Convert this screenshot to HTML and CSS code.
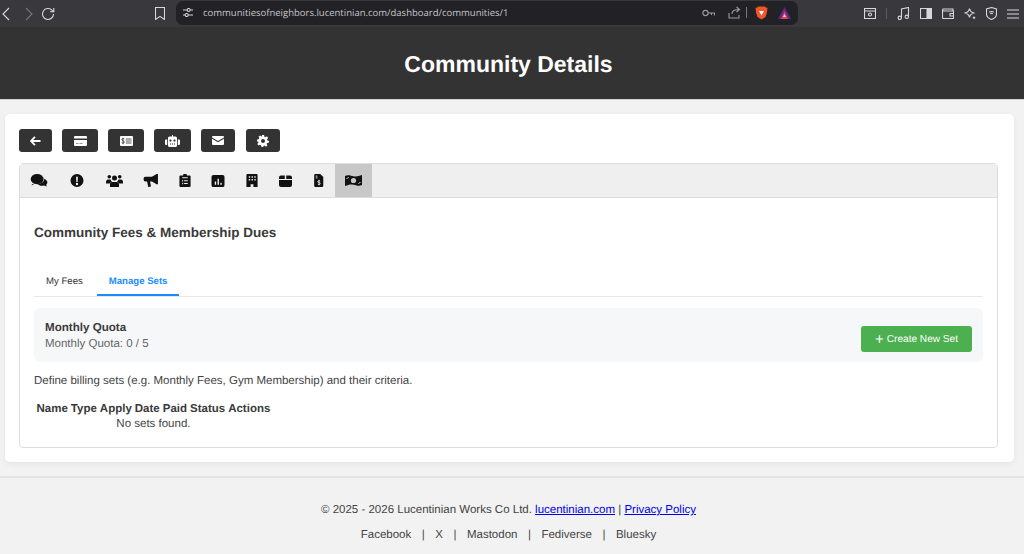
FILE: index.html
```html
<!DOCTYPE html>
<html lang="en">
<head>
  <meta charset="UTF-8" />
  <title>Community Details</title>
  <link rel="stylesheet" href="styles.css">
</head>
<body>

  <!-- BROWSER BAR -->
  <div class="browser-bar">
    <svg class="nav-icon nav-back" width="8" height="14" viewBox="0 0 8 14"><path d="M7 1 1 7l6 6"/></svg>
    <svg class="nav-icon nav-forward" width="8" height="14" viewBox="0 0 8 14"><path d="m1 1 6 6-6 6"/></svg>
    <svg class="nav-icon nav-reload" width="14" height="14" viewBox="0 0 14 14"><path d="M12.5 7A5.5 5.5 0 1 1 10.6 2.8L12.6 4.6M12.8 1v3.8H9"/></svg>
    <svg class="nav-icon nav-bookmark" width="10" height="13" viewBox="0 0 10 13"><path d="M.5.5h9v12L5 9.300.5 12.500z"/></svg>
    <div class="address-bar">
      <svg class="nav-icon tune" width="10" height="9" viewBox="0 0 10 9"><path d="M0 2h4M7.500 2H10M0 7h2M5.500 7H10"/><circle cx="5.700" cy="2" r="1.500"/><circle cx="3.700" cy="7" r="1.500"/></svg>
      <span class="url">communitiesofneighbors.lucentinian.com/dashboard/communities/1</span>
      <svg class="nav-icon key" width="13" height="8" viewBox="0 0 13 8"><circle cx="3.500" cy="4" r="2.600"/><path d="M6 4h6.500v2.500M9.500 4v2"/></svg>
      <svg class="nav-icon share" width="13" height="13" viewBox="0 0 13 13"><path d="M1 7v5h10V9M4 8c0-3 2-4.500 7-4.500M8.500 1l3 2.500-3 2.500"/></svg>
      <span class="addr-sep"></span>
      <svg class="brave" width="13" height="14" viewBox="0 0 13 14"><path d="M3 .5h7l1 1.300 1.500-.3-.5 5-1.500 4.500-4 2.500-4-2.500L1 6.500.5 1.500 2 1.800z" fill="#f0562a"/><path d="M4 5h5L6.500 9.500z" fill="#fff"/></svg>
      <svg class="triangle" width="13" height="12" viewBox="0 0 13 12"><path d="M6.500 0 13 12H0z" fill="#5c2a91"/><path d="M6.500 4 10 12H3z" fill="#e2404f"/><path d="M6.500 7 8 10H5z" fill="#f4d9c0"/></svg>
    </div>
    <div class="bar-right">
      <svg class="nav-icon" width="12" height="11" viewBox="0 0 12 11"><path d="M.5.500h11v10H.5zM.5 3h11"/><circle cx="6" cy="6.500" r="1.500"/></svg>
      <span class="bar-sep"></span>
      <svg class="nav-icon" width="13" height="13" viewBox="0 0 13 13"><path d="M4.500 10.500V2l7-1.500v9"/><circle cx="2.800" cy="10.800" r="1.700"/><circle cx="9.800" cy="9.800" r="1.700"/></svg>
      <svg class="nav-icon" width="12" height="11" viewBox="0 0 12 11"><path d="M.5.500h11v10H.5z"/><path class="solid" d="M7 .5h4.500v10H7z"/></svg>
      <svg class="nav-icon" width="12" height="11" viewBox="0 0 12 11"><path d="M11 2.500V1H1.500a1 1 0 0 0 0 2H11.500v7.500h-10a1 1 0 0 1-1-1V2M8 5.500h3.500v2.500H8z"/></svg>
      <svg class="nav-icon" width="12" height="13" viewBox="0 0 12 13"><path d="M5.500 1.500C6 4.500 7 5.500 10.500 6 7 6.500 6 7.500 5.500 10.500 5 7.500 4 6.500.5 6 4 5.500 5 4.500 5.500 1.500zM10 9.500v2.500M8.800 10.700h2.500"/></svg>
      <svg class="nav-icon" width="11" height="13" viewBox="0 0 11 13"><path d="M5.500.5 10.500 2v5c0 2.500-2 4.500-5 5.500-3-1-5-3-5-5.500V2z"/><path d="M3.200 5.200c1.500-1 3-1 4.600 0M4.300 6.800c.8-.5 1.600-.5 2.400 0"/></svg>
      <svg class="nav-icon" width="12" height="10" viewBox="0 0 12 10"><path d="M0 1h12M0 5h12M0 9h12"/></svg>
    </div>
  </div>

  <!-- HEADER -->
  <header class="page-header">
    <h1>Community Details</h1>
  </header>

  <!-- MAIN CARD -->
  <main class="card">
    <div class="action-row">
      <a class="action-btn btn-back">
        <svg width="11" height="10" viewBox="0 0 11 10"><path d="M5 .8 1 5l4 4.200M1.300 5H10.500" fill="none" stroke="#fff" stroke-width="1.800"/></svg>
      </a>
      <a class="action-btn btn-card">
        <svg width="13" height="10" viewBox="0 0 13 10"><path d="M1 0h11a1 1 0 0 1 1 1v1.500H0V1a1 1 0 0 1 1-1zM0 4h13v5a1 1 0 0 1-1 1H1a1 1 0 0 1-1-1zm2 3.500V8h2.500v-.5zm3.500 0V8h3v-.5z" fill="#fff" fill-rule="evenodd"/></svg>
      </a>
      <a class="action-btn btn-card">
        <svg width="13" height="10" viewBox="0 0 13 10"><path d="M1 0h11a1 1 0 0 1 1 1v8a1 1 0 0 1-1 1H1a1 1 0 0 1-1-1V1a1 1 0 0 1 1-1z" fill="#fff"/><path d="M4.300 3c-.5-.7-2.500-.7-2.500.6s2.500 1.100 2.500 2.500-2 1.300-2.600.6M3 1.800v6.400" fill="none" stroke="#333" stroke-width=".8"/><path d="M5.800 3h5.700M5.800 5h5.700M5.800 7h5.700" stroke="#333" stroke-width=".8"/></svg>
      </a>
      <a class="action-btn btn-robot">
        <svg width="15" height="12" viewBox="0 0 15 12"><path d="M7 0h1v1.500h2.500a1.500 1.500 0 0 1 1.500 1.500v7.500a1.500 1.500 0 0 1-1.500 1.500h-6A1.500 1.500 0 0 1 3 10.500V3a1.500 1.500 0 0 1 1.500-1.500H7zM5.500 4.500a1 1 0 1 0 0 2.200 1 1 0 0 0 0-2.200zm4 0a1 1 0 1 0 0 2.200 1 1 0 0 0 0-2.200zM5 8.500v1h1v-1zm2 0v1h1v-1zm2 0v1h1v-1zM0 5.500a1 1 0 0 1 1-1h1.200V10H1a1 1 0 0 1-1-1zM15 5.500a1 1 0 0 0-1-1h-1.200V10H14a1 1 0 0 0 1-1z" fill="#fff" fill-rule="evenodd"/></svg>
      </a>
      <a class="action-btn btn-mail">
        <svg width="12" height="9" viewBox="0 0 12 9"><path d="M1 0h10a1 1 0 0 1 1 1v.5L6 5 0 1.500V1a1 1 0 0 1 1-1zM0 2.800 6 6.300l6-3.500V8a1 1 0 0 1-1 1H1a1 1 0 0 1-1-1z" fill="#fff"/></svg>
      </a>
      <a class="action-btn btn-gear">
        <svg width="12" height="12" viewBox="0 0 12 12"><path d="M4.900 0h2.200l.3 1.700 1 .5 1.500-.9 1.300 1.700-1.200 1.200.2 1.100L12 6l-.2 1.800-1.700.2-.5 1 .9 1.500-1.600 1.300-1.200-1.200-1.100.3L6 12l-1.800-.2-.3-1.600-1-.5-1.400.9L.3 9l1.100-1.200-.2-1.100L0 6.200.2 4.400l1.700-.3.500-1L1.500 1.700 3.100.4l1.300 1.100L5 1.300zM6 4a2 2 0 1 0 0 4 2 2 0 0 0 0-4z" fill="#fff" fill-rule="evenodd"/></svg>
      </a>
    </div>

    <section class="panel">
      <nav class="tab-bar">
        <a class="tab-icon"><svg width="18" height="14" viewBox="0 0 18 14"><ellipse cx="7" cy="5.500" rx="7" ry="5.500"/><path d="M1.500 11 1 12.500 5 10z"/><path d="M14.500 5c2 .7 3.500 2.300 3.500 4 0 1-.5 2-1.300 2.700l.8 1.800-3-1c-3 .8-6-.2-7.200-2 3.900.1 7.500-2 7.200-5.500z"/></svg></a>
        <a class="tab-icon tab-wide"><svg width="14" height="14" viewBox="0 0 14 14"><path d="M7 0a7 7 0 1 1 0 14A7 7 0 0 1 7 0zM6 3l.3 5.500h1.400L8 3zm1 6.500a1.300 1.300 0 1 0 0 2.600 1.300 1.300 0 0 0 0-2.600z" fill-rule="evenodd"/></svg></a>
        <a class="tab-icon"><svg width="17" height="13" viewBox="0 0 17 13"><circle cx="3.300" cy="2.700" r="1.800"/><circle cx="13.700" cy="2.700" r="1.800"/><circle cx="8.500" cy="4" r="2.500"/><path d="M0 8c0-1.500 1-2.500 2-2.500h2.500c.3.900.8 1.600 1.500 2C4.800 8 4 9 3.800 9.500H0zM17 8c0-1.500-1-2.500-2-2.500h-2.500c-.3.900-.8 1.600-1.500 2 1.200.5 2 1.500 2.200 2H17zM6 8h5c1.300 0 2 1.200 2 2.500V13H4v-2.500C4 9.200 4.700 8 6 8z"/></svg></a>
        <a class="tab-icon"><svg width="16" height="14" viewBox="0 0 16 14"><path d="M14 0h1.500v11H14L9 8H7l1 5.500-3 .5-1.200-6H2a2 2 0 0 1-2-2V5a2 2 0 0 1 2-2h7z"/></svg></a>
        <a class="tab-icon"><svg width="12" height="14" viewBox="0 0 12 14"><path d="M4 1.500a2 2 0 0 1 4 0h3a1 1 0 0 1 1 1V13a1 1 0 0 1-1 1H1a1 1 0 0 1-1-1V2.500a1 1 0 0 1 1-1zM3 3.500v1h6v-1zM3 6.500V8h1V6.500zm2 .2v1h4v-1zM3 9.500V11h1V9.500zm2 .2v1h4v-1z" fill-rule="evenodd"/></svg></a>
        <a class="tab-icon"><svg width="14" height="14" viewBox="0 0 14 14"><path d="M2 1h10a2 2 0 0 1 2 2v9a2 2 0 0 1-2 2H2a2 2 0 0 1-2-2V3a2 2 0 0 1 2-2zm1.500 7v3.500h1.500V8zm3-3v6.500H8V5zm3 4.500v2H11v-2z" fill-rule="evenodd"/></svg></a>
        <a class="tab-icon"><svg width="14" height="14" viewBox="0 0 14 14"><path d="M2 0h10a1 1 0 0 1 1 1v13H8.500v-3h-3v3H1V1a1 1 0 0 1 1-1zm1.500 2.500v1.500H5V2.500zm3 0v1.500H8V2.500zm3 0v1.500H11V2.500zm-6 3V7H5V5.500zm3 0V7H8V5.500zm3 0V7H11V5.500z" fill-rule="evenodd"/></svg></a>
        <a class="tab-icon"><svg width="13" height="13" viewBox="0 0 13 13"><path d="M2 1.500h3.800V5H0V3.500a2 2 0 0 1 2-2zM7.200 1.500H11a2 2 0 0 1 2 2V5H7.200zM0 6h13v5a2 2 0 0 1-2 2H2a2 2 0 0 1-2-2z"/></svg></a>
        <a class="tab-icon"><svg width="13" height="15" viewBox="0 0 13 15"><path d="M3 0h5.500L12 3.500V13.500a1.500 1.500 0 0 1-1.500 1.500H3a1.500 1.500 0 0 1-1.500-1.500v-12A1.500 1.500 0 0 1 3 0z"/><path d="M3.300 2.500h2M3.300 4.500h2M8.500 8.300c-.5-.7-2.800-.8-2.800.5s2.800.9 2.800 2.300-2.300 1.300-2.900.5M7.100 6.700v6.300" fill="none" stroke="#efefef" stroke-width="1"/></svg></a>
        <a class="tab-icon is-active"><svg width="17" height="13" viewBox="0 0 17 13"><path d="M0 2c3-1.500 5-.3 8.500.3S14 2 17 1v10c-3 1.500-5 .3-8.500-.3S3 11 0 12z"/><circle cx="8.500" cy="6.500" r="2.600" fill="#c8c8c8"/><path d="M1.500 4.500c1 0 1.800-.4 2-1.300M15.500 8.500c-1 0-1.800.4-2 1.300" fill="none" stroke="#c8c8c8"/></svg></a>
      </nav>

      <div class="panel-body">
        <h2>Community Fees &amp; Membership Dues</h2>

        <div class="sub-tabs">
          <a class="sub-tab">My Fees</a>
          <a class="sub-tab is-active">Manage Sets</a>
        </div>

        <div class="quota-box">
          <div class="quota-text">
            <div class="quota-title">Monthly Quota</div>
            <div class="quota-count">Monthly Quota: 0 / 5</div>
          </div>
          <a class="create-btn"><span class="plus">+</span> Create New Set</a>
        </div>

        <p class="hint">Define billing sets (e.g. Monthly Fees, Gym Membership) and their criteria.</p>

        <table class="sets-table">
          <thead>
            <tr><th>Name</th><th>Type</th><th>Apply</th><th>Date</th><th>Paid</th><th>Status</th><th>Actions</th></tr>
          </thead>
          <tbody>
            <tr><td colspan="7">No sets found.</td></tr>
          </tbody>
        </table>
      </div>
    </section>
  </main>

  <!-- FOOTER -->
  <footer class="page-footer">
    <p class="copyright">© 2025 - 2026 Lucentinian Works Co Ltd. <a href="#">lucentinian.com</a> | <a href="#">Privacy Policy</a></p>
    <p class="socials">
      <span>Facebook</span><span>|</span><span>X</span><span>|</span><span>Mastodon</span><span>|</span><span>Fediverse</span><span>|</span><span>Bluesky</span>
    </p>
  </footer>

</body>
</html>
```

FILE: styles.css
```css
/* Global */
body {
  font-family: 'Liberation Sans', Arial, sans-serif;
  background-color: #f2f2f2;
  margin: 0;
  padding: 0;
  height: 554px;
  overflow: hidden;
  color: #333;
  text-rendering: geometricPrecision;
}

/* Browser bar */
.browser-bar {
  display: flex;
  align-items: center;
  height: 27px;
  background-color: #38383d;
}

.nav-icon {
  fill: none;
  stroke: #d8d8da;
  stroke-width: 1.1;
  flex: none;
}

.nav-icon .solid {
  fill: #d8d8da;
}

.nav-back {
  margin-left: 2px;
}

.nav-forward {
  margin-left: 15px;
  stroke: #77777b;
}

.nav-reload {
  margin-left: 8px;
}

.nav-bookmark {
  margin-left: 100px;
}

.address-bar {
  display: flex;
  align-items: center;
  margin-left: 11px;
  width: 622px;
  height: 24px;
  background-color: #212126;
  border-radius: 7px;
  margin-bottom: 2px;
}

.tune {
  margin-left: 7px;
}

.url {
  margin-left: 10px;
  font-family: 'Open Sans', sans-serif;
  font-size: 9.5px;
  color: #c6c6ca;
  flex: 1;
  white-space: nowrap;
}

.key {
  stroke: #9a9a9e;
}

.share {
  margin-left: 13px;
  stroke: #9a9a9e;
}

.addr-sep {
  width: 1px;
  height: 11px;
  margin-left: 5px;
  background-color: #77777b;
}

.brave {
  margin-left: 8px;
}

.triangle {
  margin-left: 10px;
  margin-right: 7px;
}

.bar-right {
  display: flex;
  align-items: center;
  gap: 10px;
  margin-left: 66px;
}

.bar-sep {
  width: 1px;
  height: 11px;
  background-color: #5c5c60;
}

/* Header */
.page-header {
  height: 73px;
  box-sizing: border-box;
  background-color: #333;
  border-bottom: 1px solid #d4d4d4;
  padding-top: 2px;
  padding-right: 7px;
  display: flex;
  align-items: center;
  justify-content: center;
}

.page-header h1 {
  margin: 0;
  font-size: 23px;
  font-weight: bold;
  color: #fff;
}

/* Card */
.card {
  background-color: #fff;
  margin: 14px 10px 0 5px;
  padding: 15px 16px 15px 14px;
  height: 348px;
  box-sizing: border-box;
  border-radius: 5px;
  box-shadow: 0 2px 6px rgba(0, 0, 0, 0.06);
}

.action-row {
  display: flex;
  gap: 10px;
  margin-bottom: 11px;
}

.action-btn {
  display: flex;
  align-items: center;
  justify-content: center;
  height: 23px;
  background-color: #333;
  border-radius: 3px;
}

.btn-back {
  width: 33px;
}

.btn-card {
  width: 36px;
}

.btn-robot {
  width: 37px;
}

.btn-mail {
  width: 34px;
  margin-right: 1px;
}

.btn-gear {
  width: 34px;
}

/* Panel with icon tabs */
.panel {
  border: 1px solid #ddd;
  border-radius: 4px;
  height: 285px;
  box-sizing: border-box;
}

.tab-bar {
  display: flex;
  height: 33px;
  background-color: #efefef;
  border-bottom: 1px solid #ddd;
}

.tab-icon {
  display: flex;
  align-items: center;
  justify-content: center;
  padding: 0 10px;
}

.tab-icon.tab-wide {
  padding: 0 12px;
}

.tab-icon svg {
  height: 13px;
  fill: #111;
}

.tab-icon.is-active {
  background-color: #c8c8c8;
}

.panel-body {
  padding: 27px 14px 0;
}

.panel-body h2 {
  margin: 0;
  font-size: 13.5px;
  line-height: 16px;
  font-weight: bold;
  color: #3a3a3a;
}

/* Sub tabs */
.sub-tabs {
  display: flex;
  margin-top: 24px;
  border-bottom: 1px solid #e8e8e8;
}

.sub-tab {
  padding: 11px 12px 0;
  height: 18px;
  font-size: 9.6px;
  line-height: 12px;
  color: #333;
}

.sub-tab.is-active {
  margin-left: 2px;
  font-weight: bold;
  color: #1a8cff;
  border-bottom: 2px solid #1a8cff;
}

/* Quota box */
.quota-box {
  display: flex;
  align-items: center;
  justify-content: space-between;
  margin-top: 11px;
  padding: 0 11px;
  height: 54px;
  background-color: #f6f7f9;
  border-radius: 6px;
}

.quota-text {
  padding-top: 2px;
}

.quota-title {
  font-size: 11.6px;
  line-height: 15px;
  font-weight: bold;
  color: #3a3a3a;
}

.quota-count {
  margin-top: 2px;
  font-size: 11.5px;
  line-height: 15px;
  color: #666;
}

.create-btn {
  display: flex;
  align-items: center;
  justify-content: center;
  gap: 3px;
  align-self: flex-end;
  margin-bottom: 10px;
  width: 111px;
  height: 26px;
  background-color: #4caf50;
  border-radius: 3px;
  font-size: 10.1px;
  color: #fff;
}

.plus {
  font-size: 15px;
  line-height: 15px;
}

.hint {
  margin: 12px 0 0;
  font-size: 11.5px;
  line-height: 15px;
  color: #444;
}

/* Table */
.sets-table {
  margin-top: 12px;
  border-collapse: separate;
  border-spacing: 2px;
  font-size: 11.5px;
  line-height: 13px;
}

.sets-table th {
  padding: 0 0.5px;
  font-weight: bold;
  color: #3a3a3a;
}

.sets-table td {
  text-align: center;
  padding: 0;
  color: #444;
}

/* Footer */
.page-footer {
  margin-top: 14px;
  padding-right: 7px;
  border-top: 2px solid #e4e4e4;
  text-align: center;
  font-size: 11.5px;
  color: #444;
}

.copyright {
  margin: 0;
  padding-top: 25px;
  line-height: 15px;
}

.copyright a {
  color: #00e;
}

.socials {
  display: flex;
  justify-content: center;
  gap: 10.5px;
  margin: 10px 0 0;
  line-height: 15px;
}
```
